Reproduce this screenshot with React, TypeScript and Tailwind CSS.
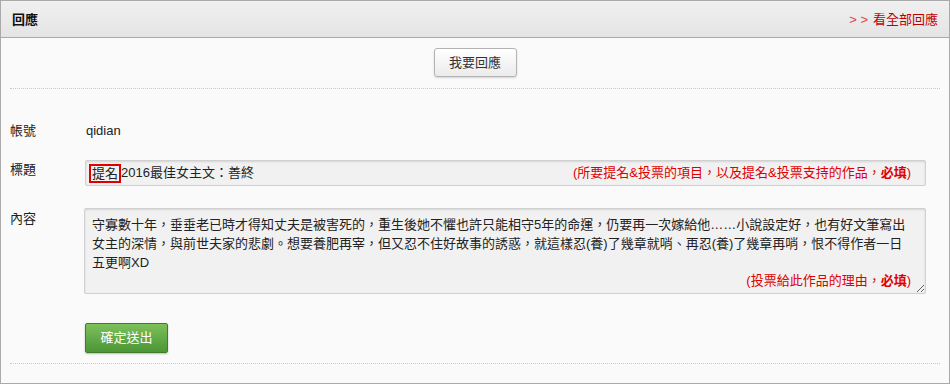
import React from 'react';

const font = "font-['Liberation_Sans','Noto_Sans_CJK_TC',sans-serif]";

const content =
  '守寡數十年，垂垂老已時才得知丈夫是被害死的，重生後她不懼也許只能相守5年的命運，仍要再一次嫁給他……小說設定好，也有好文筆寫出女主的深情，與前世夫家的悲劇。想要養肥再宰，但又忍不住好故事的誘惑，就這樣忍(養)了幾章就哨、再忍(養)了幾章再哨，恨不得作者一日五更啊XD';

const App = () => {
  return (
    <div className={`w-[950px] h-[384px] border border-[#aaa] bg-[#fafafa] text-[13px] leading-[20px] text-[#222] ${font}`}>
      <div className="h-[37px] border-b border-[#aaa] bg-gradient-to-b from-[#f0f0f0] to-[#e4e4e4] flex items-center justify-between pl-[11px] pr-[11px] pt-[1px]">
        <span className="font-bold text-[#111]">回應</span>
        <span className="text-[#c00000]">
          <span className="text-[#d44] mr-[5px]">&gt; &gt;</span>看全部回應
        </span>
      </div>

      <div className="flex justify-center mt-[10px]">
        <button className="w-[83px] h-[29px] border border-[#b3b3b3] rounded-[3px] bg-gradient-to-b from-white to-[#ebebeb] shadow-[0_1px_2px_rgba(0,0,0,0.15)] text-[#333] text-[13px]">
          我要回應
        </button>
      </div>

      <div className="mt-[11px] mx-[9px] border-t border-dotted border-[#c8c8c8]" />

      <div className="pl-[9px] pr-[23px]">
        <div className="flex mt-[32px]">
          <div className="w-[75px] shrink-0">帳號</div>
          <div className="pl-[1px]">qidian</div>
        </div>

        <div className="flex mt-[19px]">
          <div className="w-[75px] shrink-0">標題</div>
          <div className="relative flex-1 h-[26px] border border-[#d0d0d0] bg-[#f1f1f1] rounded-[2px] shadow-[inset_0_1px_2px_rgba(0,0,0,0.12)] flex items-center pl-[3px]">
            <span className="border-2 border-[#e00000] leading-[15px] px-[1px]">提名</span>
            <span>2016最佳女主文：善終</span>
            <span className="absolute right-[14px] top-[2px] text-[#e00000]">
              (所要提名&amp;投票的項目，以及提名&amp;投票支持的作品，<b>必填</b>)
            </span>
          </div>
        </div>

        <div className="flex mt-[22px]">
          <div className="w-[74px] shrink-0 pt-[1px]">內容</div>
          <div className="relative flex-1">
            <textarea
              readOnly
              defaultValue={content}
              className="block w-full h-[86px] border border-[#d0d0d0] bg-[#f1f1f1] rounded-[2px] shadow-[inset_0_1px_2px_rgba(0,0,0,0.12)] pl-[7px] pr-[10px] pt-[6px] text-[13px] leading-[19px] text-[#222] outline-none"
            />
            <span className="absolute right-[15px] bottom-[3px] text-[#e00000]">
              (投票給此作品的理由，<b>必填</b>)
            </span>
          </div>
        </div>

        <div className="mt-[29px] pl-[75px]">
          <button className="w-[83px] h-[30px] border border-[#3f7d2c] rounded-[2px] bg-gradient-to-b from-[#7cc05a] to-[#4c9636] shadow-[0_1px_2px_rgba(0,0,0,0.25)] text-white text-[13px]">
            確定送出
          </button>
        </div>
      </div>

      <div className="mt-[10px] mx-[9px] border-t border-dotted border-[#c8c8c8]" />
    </div>
  );
};

export default App;
